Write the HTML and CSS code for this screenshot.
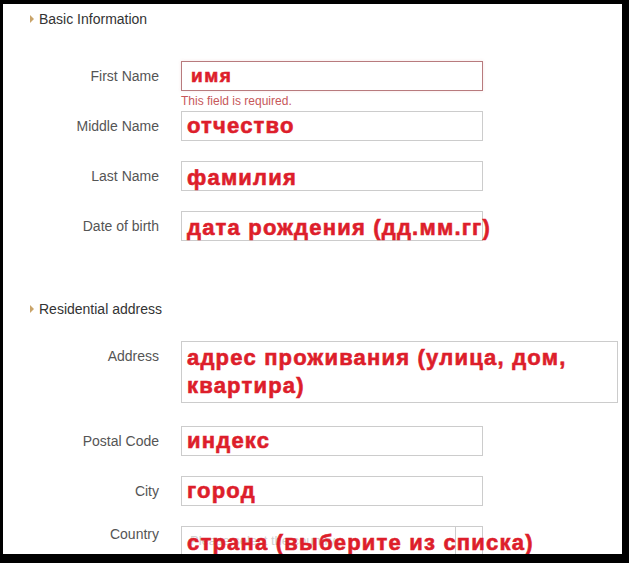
FILE: index.html
```html
<!DOCTYPE html>
<html lang="en">
<head>
<meta charset="utf-8">
<title>Form</title>
<link rel="stylesheet" href="styles.css">
</head>
<body>
<div class="page">
  <div class="section-title"><span class="arrow"></span>Basic Information</div>
  <div class="form basic">
    <div class="row row-error">
      <label class="label">First Name</label>
      <div class="control">
        <div class="field field-error"><span class="hand hand-small">имя</span></div>
        <div class="error">This field is required.</div>
      </div>
    </div>
    <div class="row">
      <label class="label">Middle Name</label>
      <div class="control"><div class="field"><span class="hand">отчество</span></div></div>
    </div>
    <div class="row">
      <label class="label">Last Name</label>
      <div class="control"><div class="field field-low"><span class="hand">фамилия</span></div></div>
    </div>
    <div class="row">
      <label class="label">Date of birth</label>
      <div class="control"><div class="field field-low"><span class="hand">дата рождения (дд.мм.гг)</span></div></div>
    </div>
  </div>

  <div class="section-title second"><span class="arrow"></span>Residential address</div>
  <div class="form address">
    <div class="row">
      <label class="label">Address</label>
      <div class="control"><div class="field field-area"><span class="hand wrap">адрес проживания (улица, дом, квартира)</span></div></div>
    </div>
    <div class="row">
      <label class="label">Postal Code</label>
      <div class="control"><div class="field"><span class="hand">индекс</span></div></div>
    </div>
    <div class="row">
      <label class="label">City</label>
      <div class="control"><div class="field"><span class="hand">город</span></div></div>
    </div>
    <div class="row">
      <label class="label label-top">Country</label>
      <div class="control">
        <div class="field field-select">
          <span class="placeholder">Please select the country</span>
          <span class="select-btn"></span>
          <span class="hand overlay">страна (выберите из списка)</span>
        </div>
      </div>
    </div>
  </div>
</div>
</body>
</html>
```

FILE: styles.css
```css
html, body {
  margin: 0;
  padding: 0;
  background: #000;
}

.page {
  margin: 4px 7px 0 3px;
  height: 550px;
  background: #fff;
  overflow: hidden;
  font-family: "Liberation Sans", Arial, sans-serif;
}

.section-title {
  display: flex;
  align-items: center;
  gap: 5px;
  padding-left: 27px;
  margin-top: 6px;
  height: 18px;
  font-size: 14px;
  color: #333;
}

.section-title.second {
  margin-top: 59px;
}

.arrow {
  width: 0;
  height: 0;
  border-top: 4px solid transparent;
  border-bottom: 4px solid transparent;
  border-left: 4px solid #c9a46a;
}

.form {
  display: flex;
  flex-direction: column;
  gap: 20px;
}

.form.basic {
  margin-top: 33px;
}

.form.address {
  margin-top: 23px;
}

.form.address .row:nth-child(2) {
  margin-top: 3px;
}

.row {
  display: grid;
  grid-template-columns: 156px auto;
  column-gap: 22px;
  align-items: start;
}

.row-error {
  margin-bottom: -20px;
}

.label {
  text-align: right;
  font-size: 14px;
  line-height: 30px;
  color: #555;
}

.label-top {
  line-height: 16px;
}

.control {
  display: flex;
  flex-direction: column;
}

.field {
  box-sizing: border-box;
  width: 302px;
  height: 30px;
  border: 1px solid #ccc;
  padding-left: 5px;
  line-height: 28px;
  white-space: nowrap;
  position: relative;
}

.field-low {
  line-height: 31px;
}

.field-error {
  border-color: #b87b7e;
  box-shadow: 0 0 3px rgba(220, 150, 150, 0.25);
  padding-left: 9px;
}

.error {
  height: 20px;
  line-height: 20px;
  font-size: 12px;
  color: #c7585a;
}

.field-area {
  width: 437px;
  height: 62px;
  padding-top: 2px;
  white-space: normal;
}

.hand {
  font-family: "Liberation Sans", Arial, sans-serif;
  font-weight: bold;
  font-size: 22px;
  letter-spacing: 1.2px;
  color: #dd1e2b;
  -webkit-text-stroke: 0.6px #dd1e2b;
}

.hand-small {
  font-size: 19px;
  letter-spacing: 1.5px;
}

.hand.wrap {
  display: block;
  line-height: 28px;
}

.field-select {
  height: 30px;
}

.placeholder {
  position: absolute;
  left: 8px;
  top: 0;
  font-size: 13px;
  color: #d0d0d0;
  line-height: 28px;
}

.select-btn {
  position: absolute;
  top: 0;
  bottom: 0;
  right: 26px;
  border-left: 1px solid #ccc;
}

.hand.overlay {
  position: absolute;
  left: 5px;
  top: 2px;
  line-height: 28px;
}
```
